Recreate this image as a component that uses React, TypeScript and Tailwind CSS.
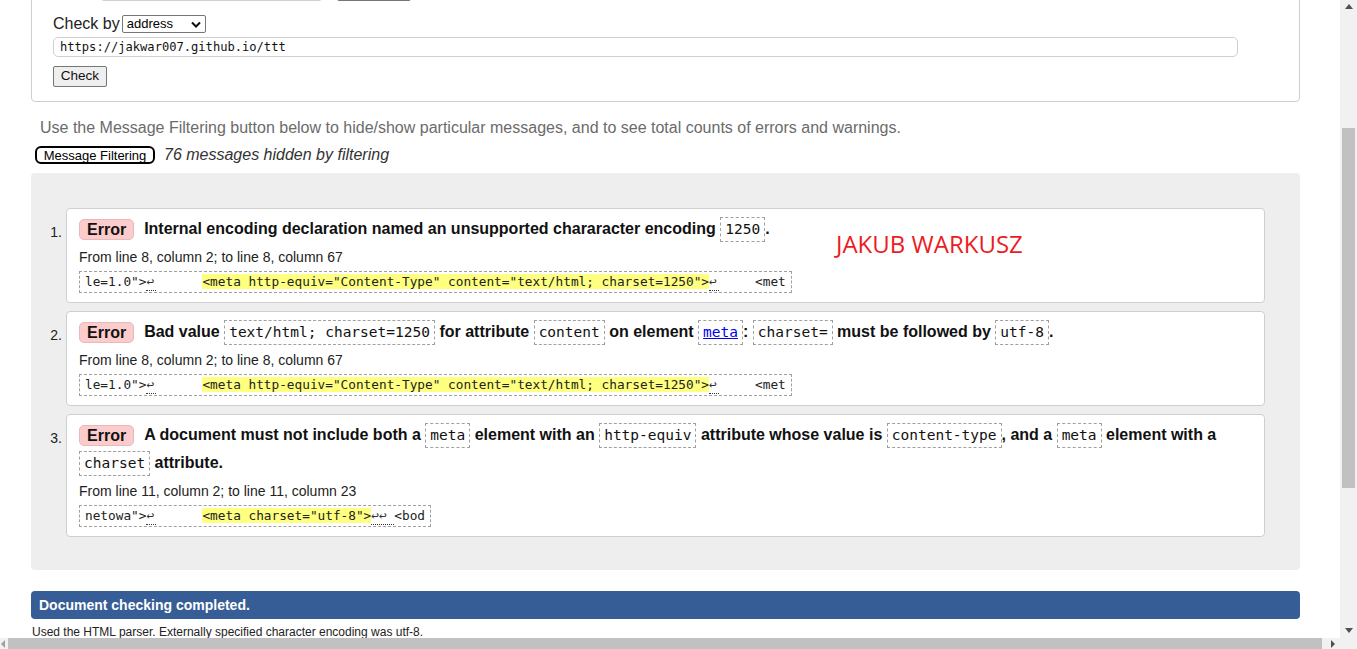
import React from "react"

const mono = "font-['DejaVu_Sans_Mono',monospace]"

function Code({ children }: { children: React.ReactNode }) {
  return (
    <code
      className={`inline-block border border-dashed border-[#a0a0a0] px-[4px] leading-[23px] font-normal text-[14.5px] text-[#111] align-middle ${mono}`}
    >
      {children}
    </code>
  )
}

function Ret({ text = "↩", w = "w-[10px]" }: { text?: string; w?: string }) {
  return (
    <span className={`inline-block ${w} border-b border-dotted border-[#333] leading-[17px] text-[#333]`}>{text}</span>
  )
}

function Extract({ before, mark, after, tail, gap = "w-[46px]" }: any) {
  return (
    <div className="mt-[3px] flex">
      <span
        className={`inline-block border border-dashed border-[#a0a0a0] px-[5px] leading-[20px] text-[12.75px] text-[#222] whitespace-pre ${mono}`}
      >
        {before}
        <Ret />
        <span className={`inline-block ${gap}`} />
        <span className="bg-[#ffff80]">{mark}</span>
        {after}
        {tail}
      </span>
    </div>
  )
}

function Card({ n, children, extra }: { n: number; children: React.ReactNode; extra?: React.ReactNode }) {
  return (
    <li className="flex">
      <div className="w-[35px] shrink-0 pr-[4px] pt-[14px] text-right text-[14px] leading-[20px] text-[#222]">{n}.</div>
      <div className="relative flex-1 rounded-[4px] border border-[#cfcfcf] bg-white px-[12px] pt-[6px] pb-[9px]">
        {children}
        {extra}
      </div>
    </li>
  )
}

function Badge() {
  return (
    <span className="mr-[10px] inline-block rounded-[5px] border border-[#e9b8b8] bg-[#fccccc] px-[7px] leading-[19px] text-[16px] font-bold text-[#111] align-middle">
      Error
    </span>
  )
}

export default function App() {
  return (
    <div className="flex h-[649px] w-[1357px] flex-col overflow-hidden bg-white font-['Liberation_Sans',Arial,sans-serif] text-black">
      <div className="flex min-h-0 flex-1">
        <div className="flex-1 overflow-hidden">
          <div className="ml-[31px] w-[1269px]">
            {/* form box */}
            <div className="-mt-[22px] rounded-[4px] border border-[#cfcfcf] pl-[21px] pb-[14px]">
              <div className="flex h-[22px]">
                <div className="ml-[47px] h-[22px] w-[223px] rounded-[4px] border border-[#cfcfcf]" />
                <div className="ml-[14px] h-[22px] w-[74px] rounded-[2px] border border-[#767676] bg-[#efefef]" />
              </div>
              <div className="mt-[13px] flex h-[20px] items-center text-[16px] text-[#222]">
                <span>Check by</span>
                <div className="ml-[2px] flex h-[18px] w-[84px] items-center justify-between rounded-[2px] border border-[#767676] bg-white pl-[4px] pr-[4px] text-[13px] text-black">
                  <span>address</span>
                  <svg width="10" height="7" viewBox="0 0 10 7">
                    <path d="M1 1.5 L5 5.5 L9 1.5" fill="none" stroke="#111" strokeWidth="2" />
                  </svg>
                </div>
              </div>
              <div
                className={`mt-[3px] flex h-[20px] w-[1185px] items-center rounded-[5px] border border-[#cfcfcf] pl-[6px] text-[12.1px] text-[#111] ${mono}`}
              >
                https://jakwar007.github.io/ttt
              </div>
              <button className="mt-[9px] flex h-[21px] w-[54px] items-center justify-center rounded-[2px] border border-[#767676] bg-[#efefef] text-[13.5px] text-[#111]">
                Check
              </button>
            </div>

            <p className="mt-[16px] pl-[9px] text-[16px] leading-[20px] text-[#6b6b6b]">
              Use the Message Filtering button below to hide/show particular messages, and to see total counts of errors and warnings.
            </p>
            <div className="mt-[8px] flex h-[18px] items-center">
              <button className="ml-[4px] flex h-[18px] w-[120px] items-center justify-center rounded-[6px] border-2 border-black text-[13px] leading-none text-black">
                Message Filtering
              </button>
              <span className="ml-[9px] text-[16px] leading-[18px] italic text-[#333]">76 messages hidden by filtering</span>
            </div>

            {/* results */}
            <ol className="mt-[9px] space-y-[8px] rounded-[4px] bg-[#eeeeee] pt-[35px] pr-[35px] pb-[33px]">
              <Card
                n={1}
                extra={
                  <span className="absolute top-[23px] left-[769px] font-['Open_Sans',sans-serif] text-[24px] leading-none text-[#ec1c24]">
                    JAKUB WARKUSZ
                  </span>
                }
              >
                <p className="text-[16px] font-bold leading-[28px] text-[#111]">
                  <Badge />
                  Internal encoding declaration named an unsupported chararacter encoding <Code>1250</Code>.
                </p>
                <p className="mt-[3px] text-[14px] leading-[22px] text-[#222]">From line 8, column 2; to line 8, column 67</p>
                <Extract
                  before={'le=1.0">'}
                  mark={'<meta http-equiv="Content-Type" content="text/html; charset=1250">'}
                  after={<Ret />}
                  tail={<span className="ml-[36px]">{"<met"}</span>}
                />
              </Card>
              <Card n={2}>
                <p className="text-[16px] font-bold leading-[28px] text-[#111]">
                  <Badge />
                  Bad value <Code>text/html; charset=1250</Code> for attribute <Code>content</Code> on element{" "}
                  <Code>
                    <a className="text-[#0000ee] underline">meta</a>
                  </Code>
                  : <Code>charset=</Code> must be followed by <Code>utf-8</Code>.
                </p>
                <p className="mt-[3px] text-[14px] leading-[22px] text-[#222]">From line 8, column 2; to line 8, column 67</p>
                <Extract
                  before={'le=1.0">'}
                  mark={'<meta http-equiv="Content-Type" content="text/html; charset=1250">'}
                  after={<Ret />}
                  tail={<span className="ml-[36px]">{"<met"}</span>}
                />
              </Card>
              <Card n={3}>
                <p className="text-[16px] font-bold leading-[28px] text-[#111]">
                  <Badge />
                  A document must not include both a <Code>meta</Code> element with an <Code>http-equiv</Code> attribute whose value is{" "}
                  <Code>content-type</Code>, and a <Code>meta</Code> element with a <Code>charset</Code> attribute.
                </p>
                <p className="mt-[3px] text-[14px] leading-[22px] text-[#222]">From line 11, column 2; to line 11, column 23</p>
                <Extract
                  before={'netowa">'}
                  mark={'<meta charset="utf-8">'}
                  after={<Ret text="↩↩" w="w-[23px]" />}
                  tail={<span>{"<bod"}</span>}
                />
              </Card>
            </ol>

            <div className="mt-[21px] flex h-[28px] items-center rounded-[4px] bg-[#365d95] px-[8px] text-[14px] font-bold text-white">
              Document checking completed.
            </div>
            <p className="mt-[6px] ml-[1px] text-[12px] leading-[14px] text-[#222]">
              Used the HTML parser. Externally specified character encoding was utf-8.
            </p>
          </div>
        </div>

        {/* vertical scrollbar */}
        <div className="flex w-[17px] shrink-0 flex-col items-center bg-[#f1f1f1]">
          <svg className="mt-[4px]" width="8" height="5" viewBox="0 0 8 5">
            <path d="M0 5 L4 0 L8 5 Z" fill="#505050" />
          </svg>
          <div className="mt-[119px] h-[360px] w-[13px] bg-[#c1c1c1]" />
          <div className="flex-1" />
          <svg className="mb-[5px]" width="8" height="5" viewBox="0 0 8 5">
            <path d="M0 0 L4 5 L8 0 Z" fill="#505050" />
          </svg>
        </div>
      </div>

      {/* horizontal scrollbar */}
      <div className="flex h-[11px] shrink-0">
        <div className="flex flex-1 items-center bg-[#f1f1f1]">
          <svg className="ml-[1px]" width="4" height="8" viewBox="0 0 4 8">
            <path d="M4 0 L0 4 L4 8 Z" fill="#a0a0a0" />
          </svg>
          <div className="ml-[3px] h-[11px] w-[1314px] bg-[#c1c1c1]" />
          <svg className="ml-[9px]" width="4" height="8" viewBox="0 0 4 8">
            <path d="M0 0 L4 4 L0 8 Z" fill="#505050" />
          </svg>
        </div>
        <div className="w-[17px] bg-[#f1f1f1]" />
      </div>
    </div>
  )
}
